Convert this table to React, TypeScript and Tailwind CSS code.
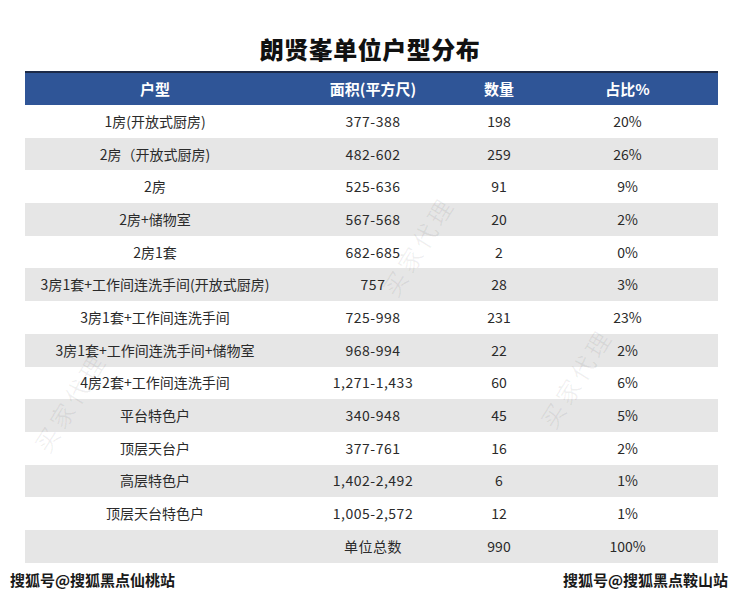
const rows: [string, string, string, string][] = [
  ["1房(开放式厨房)", "377-388", "198", "20%"],
  ["2房（开放式厨房)", "482-602", "259", "26%"],
  ["2房", "525-636", "91", "9%"],
  ["2房+储物室", "567-568", "20", "2%"],
  ["2房1套", "682-685", "2", "0%"],
  ["3房1套+工作间连洗手间(开放式厨房)", "757", "28", "3%"],
  ["3房1套+工作间连洗手间", "725-998", "231", "23%"],
  ["3房1套+工作间连洗手间+储物室", "968-994", "22", "2%"],
  ["4房2套+工作间连洗手间", "1,271-1,433", "60", "6%"],
  ["平台特色户", "340-948", "45", "5%"],
  ["顶层天台户", "377-761", "16", "2%"],
  ["高层特色户", "1,402-2,492", "6", "1%"],
  ["顶层天台特色户", "1,005-2,572", "12", "1%"],
  ["", "单位总数", "990", "100%"],
];

const font = { fontFamily: '"Noto Sans CJK SC", "Noto Sans", sans-serif' };

function Mark({ className }: { className: string }) {
  return (
    <div
      className={`absolute text-[24px] tracking-[4px] text-black/[0.06] -rotate-[58deg] select-none pointer-events-none ${className}`}
    >
      买家代理
    </div>
  );
}

export default function App() {
  return (
    <div className="relative w-[740px] h-[596px] bg-white overflow-hidden" style={font}>
      <div className="h-[71px] flex items-end justify-center pb-[10px]">
        <h1 className="text-[24px] font-black text-[#111] leading-none tracking-[0.5px]">朗贤峯单位户型分布</h1>
      </div>

      <div className="mx-[25px] w-[693px]">
        <div className="grid grid-cols-[260px_176px_76px_181px] h-[34px] bg-[#2f5597] border-t-2 border-[#1c2a48] text-white font-bold text-[15px]">
          <div className="flex items-center justify-center">户型</div>
          <div className="flex items-center justify-center">面积(平方尺)</div>
          <div className="flex items-center justify-center">数量</div>
          <div className="flex items-center justify-center">占比%</div>
        </div>
        {rows.map((r, i) => (
          <div
            key={i}
            className={`grid grid-cols-[260px_176px_76px_181px] h-[32.7px] text-[14px] text-[#2a2a2a] ${
              i % 2 === 1 ? "bg-[#e6e6e6]" : "bg-white"
            }`}
          >
            <div className="flex items-center justify-center whitespace-nowrap">{r[0]}</div>
            <div className="flex items-center justify-center tracking-[0.5px]">{r[1]}</div>
            <div className="flex items-center justify-center">{r[2]}</div>
            <div className="flex items-center justify-center">{r[3]}</div>
          </div>
        ))}
      </div>

      <div className="flex justify-between items-center px-[10px] mt-[6px] text-[15px] font-bold text-[#1a1a1a]">
        <span>搜狐号@搜狐黑点仙桃站</span>
        <span className="mr-[2px]">搜狐号@搜狐黑点鞍山站</span>
      </div>

      <Mark className="left-[362px] top-[228px]" />
      <Mark className="left-[520px] top-[360px]" />
      <Mark className="left-[14px] top-[384px]" />
    </div>
  );
}
